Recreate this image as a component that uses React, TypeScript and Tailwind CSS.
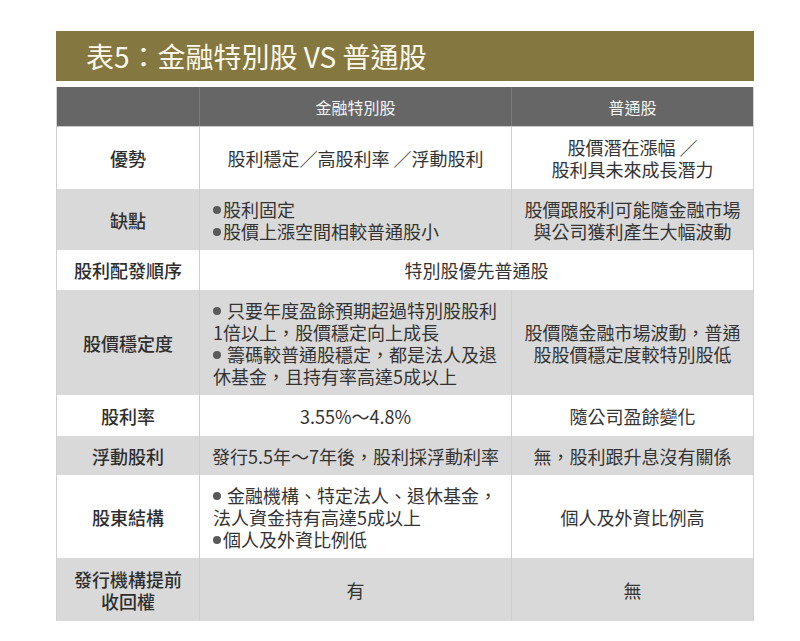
import React from "react";

const Dot = ({ gap = "mr-[2px]" }: { gap?: string }) => (
  <span className={`inline-block w-[8px] h-[8px] rounded-full bg-[#5a5a5a] align-middle relative -top-[2px] ${gap}`}></span>
);

type Row = {
  label: React.ReactNode;
  h: string;
  gray: boolean;
  c2: React.ReactNode;
  c3?: React.ReactNode;
  c2Left?: boolean;
};

const rows: Row[] = [
  {
    label: "優勢",
    h: "h-[62px]",
    gray: false,
    c2: "股利穩定／高股利率 ／浮動股利",
    c3: (
      <>
        <div>股價潛在漲幅 ／</div>
        <div>股利具未來成長潛力</div>
      </>
    ),
  },
  {
    label: "缺點",
    h: "h-[61px]",
    gray: true,
    c2Left: true,
    c2: (
      <>
        <div><Dot />股利固定</div>
        <div><Dot />股價上漲空間相較普通股小</div>
      </>
    ),
    c3: (
      <>
        <div>股價跟股利可能隨金融市場</div>
        <div>與公司獲利產生大幅波動</div>
      </>
    ),
  },
  {
    label: "股利配發順序",
    h: "h-[40px]",
    gray: false,
    c2: "特別股優先普通股",
  },
  {
    label: "股價穩定度",
    h: "h-[105px]",
    gray: true,
    c2Left: true,
    c2: (
      <>
        <div><Dot gap="mr-[6px]" />只要年度盈餘預期超過特別股股利</div>
        <div>1倍以上，股價穩定向上成長</div>
        <div><Dot gap="mr-[6px]" />籌碼較普通股穩定，都是法人及退</div>
        <div>休基金，且持有率高達5成以上</div>
      </>
    ),
    c3: (
      <>
        <div>股價隨金融市場波動，普通</div>
        <div>股股價穩定度較特別股低</div>
      </>
    ),
  },
  {
    label: "股利率",
    h: "h-[41px]",
    gray: false,
    c2: "3.55%～4.8%",
    c3: "隨公司盈餘變化",
  },
  {
    label: "浮動股利",
    h: "h-[39px]",
    gray: true,
    c2: "發行5.5年～7年後，股利採浮動利率",
    c3: "無，股利跟升息沒有關係",
  },
  {
    label: "股東結構",
    h: "h-[83px]",
    gray: false,
    c2Left: true,
    c2: (
      <>
        <div><Dot gap="mr-[6px]" />金融機構、特定法人、退休基金，</div>
        <div>法人資金持有高達5成以上</div>
        <div><Dot />個人及外資比例低</div>
      </>
    ),
    c3: "個人及外資比例高",
  },
  {
    label: (
      <>
        <div>發行機構提前</div>
        <div>收回權</div>
      </>
    ),
    h: "h-[63px]",
    gray: true,
    c2: "有",
    c3: "無",
  },
];

export default function App() {
  return (
    <div
      className="w-[800px] h-[641px] bg-white pt-[31px] pl-[56px]"
      style={{ fontFamily: '"Noto Sans CJK TC", "Noto Sans", sans-serif' }}
    >
      <div className="w-[698px] h-[50px] bg-[#857740] flex items-center pl-[30px]">
        <span className="text-[28px] text-[#fdf9ea] leading-none">表5：金融特別股 VS 普通股</span>
      </div>

      <div className="w-[698px] mt-[6px] border-x border-[#d2d2d2] text-[#333333]">
        <div className="h-[40px] flex bg-[#666666] text-[16px] text-[#f4f4f4] border-b border-[#c9c9c9]">
          <div className="w-[143px] border-r border-[#7a7a7a]"></div>
          <div className="w-[312px] flex items-center justify-center border-r border-[#7a7a7a]">金融特別股</div>
          <div className="flex-1 flex items-center justify-center">普通股</div>
        </div>

        {rows.map((r, i) => (
          <div
            key={i}
            className={`${r.h} flex text-[18px] leading-[22px] ${r.gray ? "bg-[#d9d9d9]" : "bg-white"}`}
          >
            <div className="w-[143px] flex flex-col items-center justify-center text-center font-medium text-[#2e2e2e] border-r border-[#cfcfcf]">
              {r.label}
            </div>
            {r.c3 === undefined ? (
              <div className="flex-1 flex items-center justify-center">{r.c2}</div>
            ) : (
              <>
                <div
                  className={`w-[312px] flex flex-col justify-center whitespace-nowrap border-r border-[#cfcfcf] ${
                    r.c2Left ? "items-start pl-[13px]" : "items-center text-center"
                  }`}
                >
                  {r.c2}
                </div>
                <div className="flex-1 flex flex-col items-center justify-center text-center whitespace-nowrap">
                  {r.c3}
                </div>
              </>
            )}
          </div>
        ))}
      </div>
    </div>
  );
}
